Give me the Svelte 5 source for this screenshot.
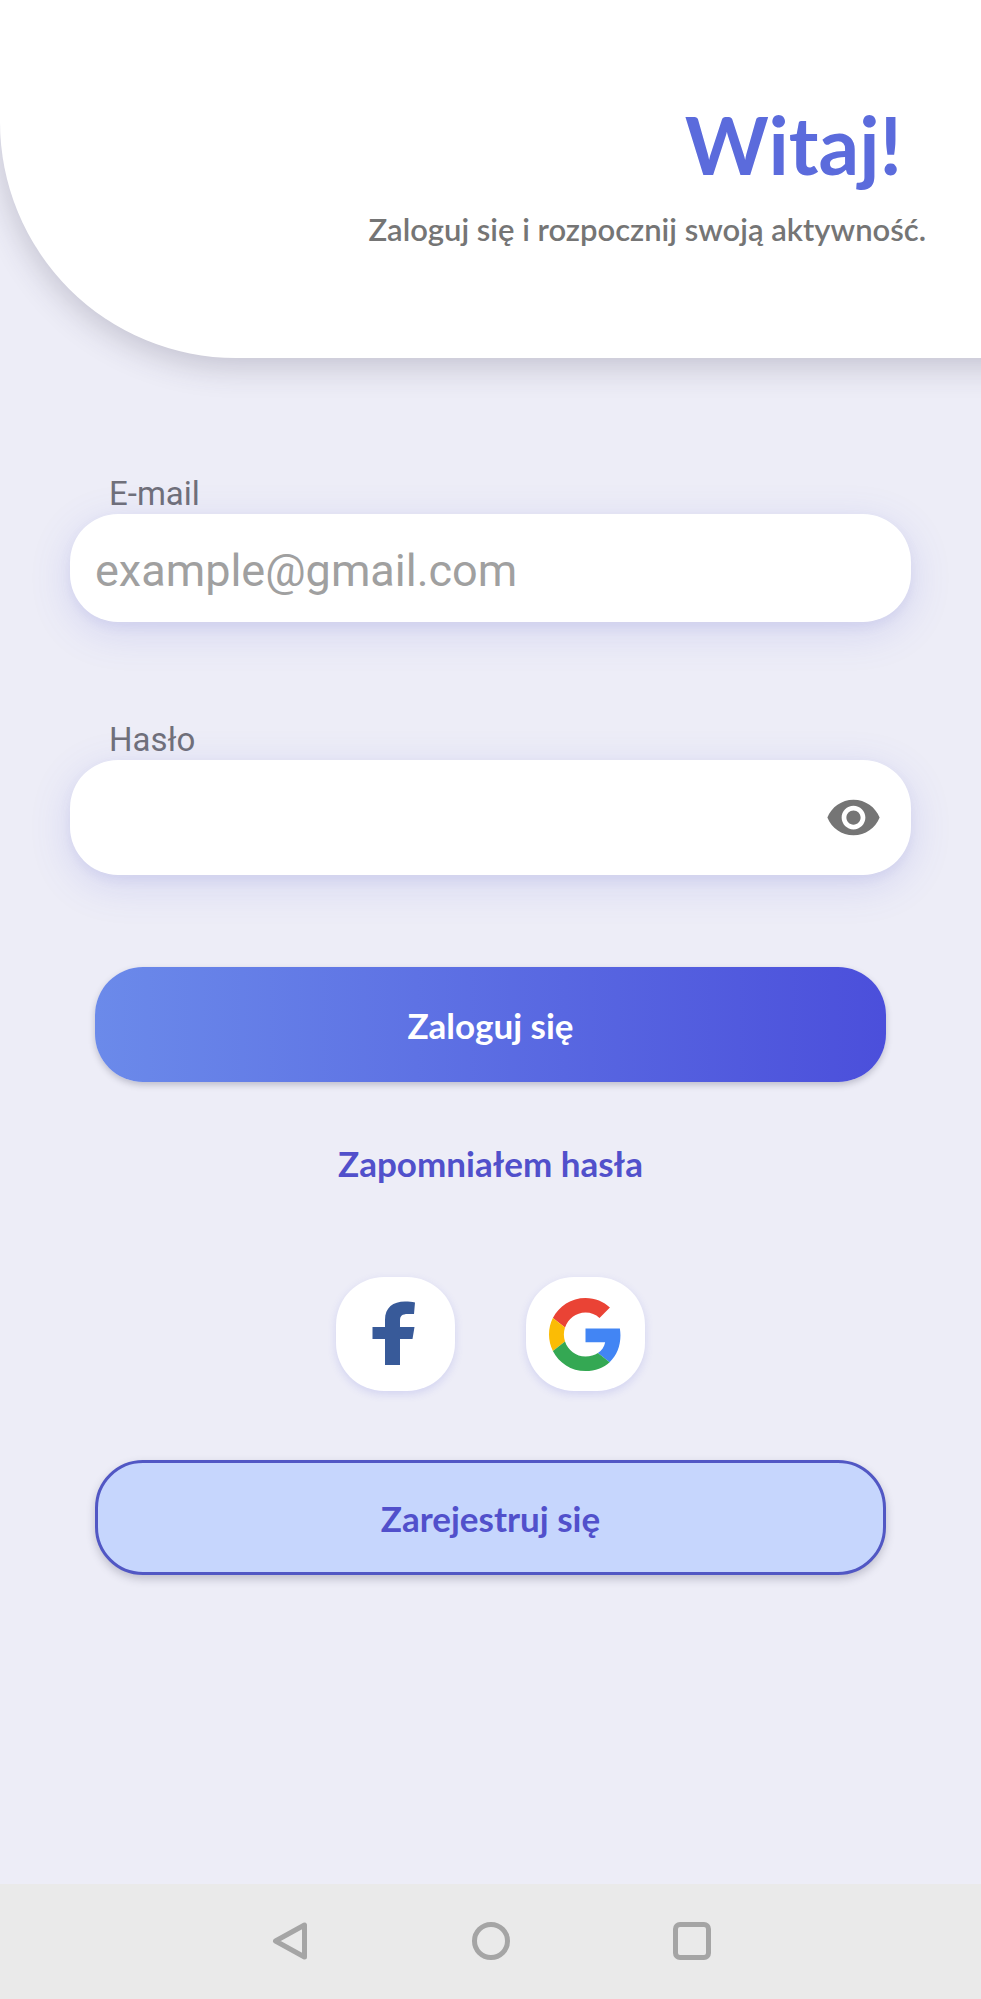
<script>
  let email = $state('');
  let password = $state('');
  let visible = $state(false);
</script>

<div class="page">
  <header>
    <h1>Witaj!</h1>
    <p>Zaloguj się i rozpocznij swoją aktywność.</p>
  </header>

  <main>
    <form onsubmit={(e) => e.preventDefault()}>
      <div class="field">
        <label for="email">E-mail</label>
        <div class="box">
          <input id="email" type="email" placeholder="example@gmail.com" bind:value={email} />
        </div>
      </div>

      <div class="field">
        <label for="password">Hasło</label>
        <div class="box tall">
          <input id="password" type={visible ? 'text' : 'password'} bind:value={password} />
          <button class="eye" type="button" aria-label="Pokaż hasło" onclick={() => (visible = !visible)}>
            <svg viewBox="0 0 24 24" fill="#757575">
              <path d="M12 4.500C7 4.500 2.730 7.610 1 12c1.730 4.390 6 7.500 11 7.500s9.270-3.110 11-7.500c-1.730-4.390-6-7.500-11-7.500zM12 17c-2.760 0-5-2.240-5-5s2.240-5 5-5 5 2.240 5 5-2.240 5-5 5zm0-8c-1.660 0-3 1.340-3 3s1.340 3 3 3 3-1.340 3-3-1.340-3-3-3z" />
            </svg>
          </button>
        </div>
      </div>

      <button class="action login" type="submit">Zaloguj się</button>
    </form>

    <a class="forgot" href="#reset">Zapomniałem hasła</a>

    <div class="socials">
      <button type="button" aria-label="Facebook">
        <svg class="facebook" viewBox="0 0 119 114" fill="#385a99">
          <path d="M49 88V62H36.500V50H49V43C49 30.500 57 24.500 69 24.500c4 0 7 .3 10 1L78 37h-6c-6 0-8 2-8 6.500V50h14.500L76.500 62H64v26z" />
        </svg>
      </button>
      <button type="button" aria-label="Google">
        <svg class="google" viewBox="0 0 48 48">
          <path fill="#ea4335" d="M24 9.500c3.540 0 6.710 1.220 9.210 3.600l6.850-6.850C35.900 2.380 30.470 0 24 0 14.620 0 6.510 5.380 2.560 13.220l7.980 6.190C12.430 13.720 17.740 9.500 24 9.500z" />
          <path fill="#4285f4" d="M46.980 24.550c0-1.570-.15-3.090-.38-4.550H24v9.020h12.940c-.58 2.960-2.260 5.480-4.780 7.180l7.730 6c4.510-4.180 7.090-10.360 7.090-17.650z" />
          <path fill="#fbbc05" d="M10.530 28.590c-.48-1.450-.76-2.990-.76-4.590s.27-3.140.76-4.590l-7.980-6.190C.92 16.460 0 20.120 0 24c0 3.880.92 7.540 2.560 10.780l7.970-6.190z" />
          <path fill="#34a853" d="M24 48c6.480 0 11.930-2.130 15.890-5.810l-7.730-6c-2.150 1.450-4.920 2.300-8.160 2.300-6.260 0-11.570-4.220-13.470-9.910l-7.980 6.190C6.510 42.620 14.620 48 24 48z" />
        </svg>
      </button>
    </div>

    <button class="action register" type="button">Zarejestruj się</button>
  </main>

  <nav aria-label="System">
    <button type="button" aria-label="Wstecz">
      <svg viewBox="0 0 40 40"><path d="M34.500 4V36L5.500 20z" /></svg>
    </button>
    <button type="button" aria-label="Ekran główny">
      <svg viewBox="0 0 40 40"><circle cx="20" cy="20" r="16.500" /></svg>
    </button>
    <button type="button" aria-label="Ostatnie">
      <svg viewBox="0 0 40 40"><rect x="3.500" y="3.500" width="33" height="33" rx="4.500" /></svg>
    </button>
  </nav>
</div>

<style>
  :global(body) {
    margin: 0;
    background: #ededf7;
  }

  .page {
    display: flex;
    flex-direction: column;
    min-height: 100vh;
    overflow: hidden;
    background: #ededf7;
    font-family: Lato, 'Open Sans', sans-serif;
  }

  button {
    padding: 0;
    border: 0;
    background: none;
    font: inherit;
    cursor: pointer;
  }

  svg {
    display: block;
  }

  /* Runs past the right edge so the shadow stays even along the bottom. */
  header {
    margin-right: -48px;
    padding: 92px 103px 102px 48px;
    border-bottom-left-radius: 236px;
    background: #fff;
    box-shadow: 0 8px 32px rgba(60, 55, 80, 0.24);
    text-align: right;
  }

  h1 {
    margin: 0 24px 0 0;
    color: #5b6bdc;
    font-size: 80px;
    font-weight: 700;
    line-height: 104px;
  }

  p {
    margin: 6px 0 0;
    color: #757575;
    font-size: 31px;
    font-weight: 600;
    line-height: 54px;
  }

  main {
    display: flex;
    flex-direction: column;
    padding: 116px 70px 0;
  }

  form {
    display: flex;
    flex-direction: column;
  }

  .field {
    display: flex;
    flex-direction: column;
    margin-bottom: 98px;
    font-family: Roboto, sans-serif;
  }

  .field + .field {
    margin-bottom: 92px;
  }

  label {
    align-self: flex-start;
    margin-left: 39px;
    color: #70707a;
    font-size: 33px;
    line-height: 40px;
  }

  .box {
    display: flex;
    align-items: center;
    height: 108px;
    padding: 0 29px 0 25px;
    border-radius: 48px;
    background: #fff;
    box-shadow: 0 10px 40px rgba(88, 92, 214, 0.17), 0 5px 12px rgba(88, 92, 180, 0.08);
  }

  .tall {
    height: 115px;
  }

  input {
    flex: 1;
    min-width: 0;
    height: 100%;
    padding: 4px 0 0;
    border: 0;
    box-sizing: border-box;
    outline: 0;
    background: none;
    color: #333;
    font-family: inherit;
    font-size: 45px;
  }

  input::placeholder {
    color: #a0a0a0;
    opacity: 1;
  }

  .eye svg {
    width: 57px;
    height: 57px;
  }

  .action {
    box-sizing: border-box;
    height: 115px;
    margin: 0 25px;
    border-radius: 48px;
    font-size: 35px;
    font-weight: 700;
  }

  .login {
    background: linear-gradient(90deg, #6b8aea, #4b4fdb);
    box-shadow: 0 3px 6px rgba(50, 50, 80, 0.25);
    color: #fff;
  }

  .register {
    border: 3px solid #5157c4;
    background: #c6d6fd;
    box-shadow: 0 4px 8px rgba(50, 50, 80, 0.25);
    color: #5150cb;
  }

  .forgot {
    align-self: center;
    margin-top: 58px;
    color: #5150cb;
    font-size: 35px;
    font-weight: 700;
    line-height: 46px;
    text-decoration: none;
  }

  .socials {
    display: flex;
    justify-content: center;
    gap: 71px;
    margin: 91px 0 69px;
  }

  .socials button {
    display: grid;
    place-items: center;
    width: 119px;
    height: 114px;
    border-radius: 48px;
    background: #fff;
    box-shadow: 0 3px 8px rgba(88, 92, 214, 0.18);
  }

  .facebook {
    width: 119px;
    height: 114px;
  }

  .google {
    width: 73px;
    height: 73px;
  }

  nav {
    display: flex;
    justify-content: center;
    gap: 161px;
    margin-top: auto;
    padding: 37px 0 38px;
    background: #eaeaea;
  }

  nav svg {
    width: 40px;
    height: 40px;
    fill: none;
    stroke: #a5a5a5;
    stroke-width: 5;
    stroke-linejoin: round;
  }
</style>
